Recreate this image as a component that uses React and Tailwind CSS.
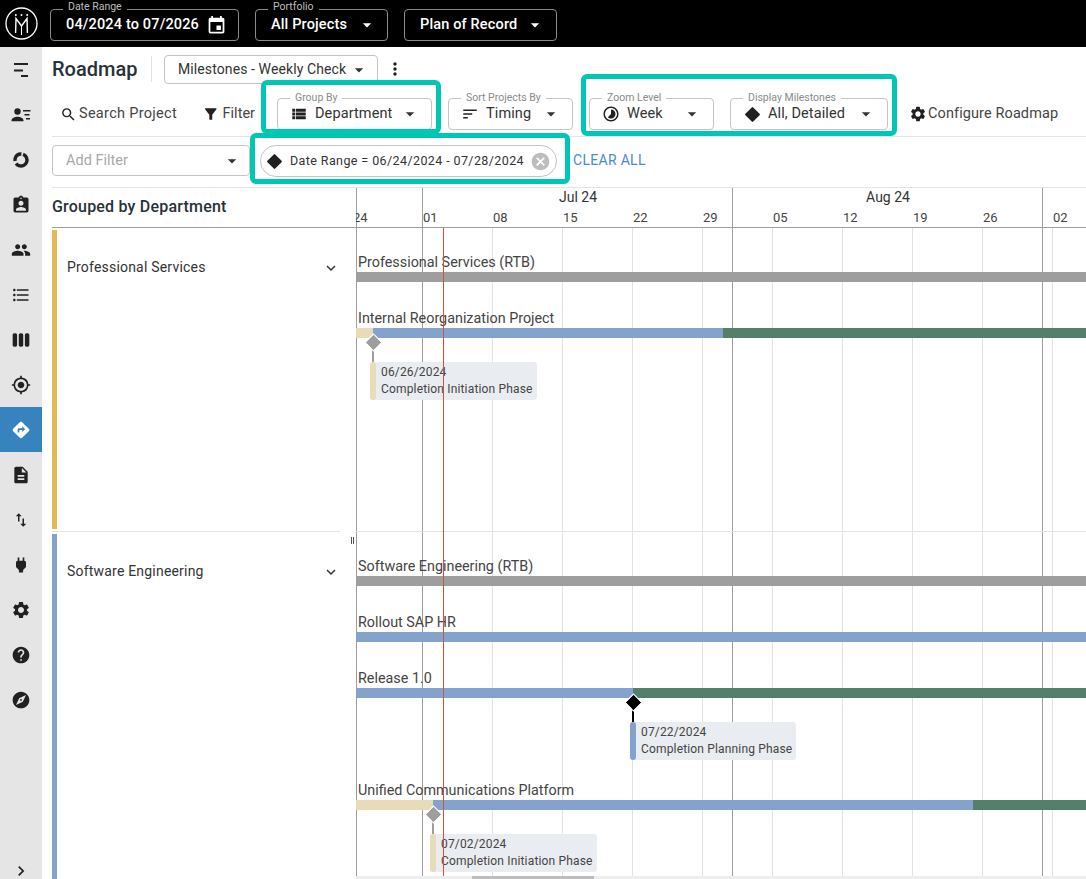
import React from 'react';
import {
  MdArrowDropDown, MdEvent, MdSearch, MdFilterAlt, MdViewList, MdSort, MdSettings, MdCancel,
  MdChevronRight, MdExpandMore, MdMoreVert, MdAssignmentInd, MdPeople, MdFormatListBulleted,
  MdViewWeek, MdGpsFixed, MdDirections, MdDescription, MdPower, MdHelp, MdExplore,
  MdSwapVert, MdTimelapse,
} from 'react-icons/md';

const FirstNavIcon = () => (
  <svg width="20" height="20" viewBox="0 0 20 20" fill="currentColor">
    <rect x="3" y="3" width="14" height="2" />
    <rect x="3" y="9.5" width="9" height="2" />
    <rect x="10" y="15" width="7" height="2" />
  </svg>
);

const ContactNavIcon = () => (
  <svg width="20" height="20" viewBox="0 0 20 20" fill="currentColor">
    <circle cx="6.5" cy="6.5" r="3.2" />
    <path d="M0.5 15.5c0-2.6 3.6-3.8 6-3.8s6 1.2 6 3.8v0.7h-12z" />
    <rect x="12" y="5" width="7.5" height="1.5" />
    <rect x="13.5" y="9" width="5" height="1.5" />
    <rect x="15" y="13" width="4" height="1.5" />
  </svg>
);

const DonutNavIcon = () => (
  <svg width="20" height="20" viewBox="0 0 20 20" fill="none" stroke="currentColor">
    <circle cx="10" cy="10" r="6" strokeWidth="3.4" strokeDasharray="22 2.5 10.5 2.7" transform="rotate(-70 10 10)" />
  </svg>
);

const Logo = () => (
  <svg width="33" height="33" viewBox="0 0 33 33" fill="none" stroke="#fff">
    <circle cx="16.5" cy="16.5" r="15.5" strokeWidth="1.3" />
    <path d="M10.6 26L11 11.5L16.5 19L22 11.5L22.4 26" strokeWidth="1.4" />
    <path d="M16.5 19V28" strokeWidth="1" />
    <circle cx="10.8" cy="8" r="1" fill="#fff" stroke="none" />
    <circle cx="16.5" cy="8" r="1" fill="#fff" stroke="none" />
    <circle cx="22.2" cy="8" r="1" fill="#fff" stroke="none" />
  </svg>
);

const Diamond = ({ className = '' }) => (
  <span className={`block w-[11px] h-[11px] rotate-45 rounded-[1px] bg-[#212121] ${className}`} />
);

const navItems = [
  { icon: <FirstNavIcon /> },
  { icon: <ContactNavIcon /> },
  { icon: <DonutNavIcon /> },
  { icon: <MdAssignmentInd size={20} /> },
  { icon: <MdPeople size={20} /> },
  { icon: <MdFormatListBulleted size={20} /> },
  { icon: <MdViewWeek size={20} /> },
  { icon: <MdGpsFixed size={20} /> },
  { icon: <MdDirections size={20} />, active: true },
  { icon: <MdDescription size={20} /> },
  { icon: <MdSwapVert size={18} /> },
  { icon: <MdPower size={20} /> },
  { icon: <MdSettings size={20} /> },
  { icon: <MdHelp size={20} /> },
  { icon: <MdExplore size={20} /> },
];

const HeaderField = ({ label, children, className = '' }) => (
  <div className={`relative h-[32px] mt-[3px] flex items-center rounded-[4px] border border-[#8a8a8a] text-white font-medium text-[14.5px] tracking-[0.15px] ${className}`}>
    {label && (
      <span className="absolute -top-[10px] left-[12px] bg-black px-[5px] text-[10.5px] leading-[13px] font-normal tracking-normal text-[#bdbdbd]">
        {label}
      </span>
    )}
    {children}
  </div>
);

const ToolField = ({ label, icon, value, className = '' }) => (
  <div className={`relative h-[32px] shrink-0 flex items-center rounded-[4px] border border-[#c4c4c4] bg-white pl-[12px] text-[14.5px] tracking-[0.1px] text-[#333] ${className}`}>
    <span className="absolute -top-[8px] left-[12px] bg-white px-[5px] text-[10.5px] leading-[13px] text-[#8a8a8a] tracking-normal whitespace-nowrap">
      {label}
    </span>
    <span className="w-[18px] flex justify-center text-[#212121]">{icon}</span>
    <span className="ml-[7px] flex-1 whitespace-nowrap">{value}</span>
    <MdArrowDropDown size={20} className="mr-[11px] text-[#333]" />
  </div>
);

// teal annotation frame laid over the controls it marks
const Highlight = ({ className = '' }) => (
  <div className={`absolute z-10 pointer-events-none rounded-[6px] border-[5px] border-[#00c6b5] ${className}`} />
);

const months = [
  { label: 'Jul 24', x: 222 },
  { label: 'Aug 24', x: 532 },
];

const weeks = [
  { label: '01', x: 66 },
  { label: '08', x: 136 },
  { label: '15', x: 206 },
  { label: '22', x: 276 },
  { label: '29', x: 346 },
  { label: '05', x: 416 },
  { label: '12', x: 486 },
  { label: '19', x: 556 },
  { label: '26', x: 626 },
  { label: '02', x: 696 },
];

const majorLines = [0, 66, 376, 686];

const TAN = 'bg-[#e8dbb8]';
const BLUE = 'bg-[#84a3cc]';
const GREEN = 'bg-[#537f6b]';
const GRAY = 'bg-[#9e9e9e]';

// all x / y are relative to the timeline canvas (left 356, top 228)
const rows = [
  { name: 'Professional Services (RTB)', y: 44, parts: [{ c: GRAY, to: 730 }] },
  { name: 'Internal Reorganization Project', y: 100, parts: [{ c: TAN, to: 17 }, { c: BLUE, to: 367 }, { c: GREEN, to: 730 }] },
  { name: 'Software Engineering (RTB)', y: 348, parts: [{ c: GRAY, to: 730 }] },
  { name: 'Rollout SAP HR', y: 404, parts: [{ c: BLUE, to: 730 }] },
  { name: 'Release 1.0', y: 460, parts: [{ c: BLUE, to: 277 }, { c: GREEN, to: 730 }] },
  { name: 'Unified Communications Platform', y: 572, parts: [{ c: TAN, to: 77 }, { c: BLUE, to: 617 }, { c: GREEN, to: 730 }] },
];

const milestones = [
  { x: 17, y: 110, date: '06/26/2024', text: 'Completion Initiation Phase', bar: TAN, done: false },
  { x: 277, y: 470, date: '07/22/2024', text: 'Completion Planning Phase', bar: BLUE, done: true },
  { x: 77, y: 582, date: '07/02/2024', text: 'Completion Initiation Phase', bar: TAN, done: false },
];

const Timeline = () => (
  <div className="relative flex-1 h-full overflow-hidden">
    {weeks.map((w) => (
      <div key={w.x} className="absolute top-0 bottom-0 w-px bg-[#e2e2e2]" style={{ left: w.x }} />
    ))}
    {majorLines.map((x) => (
      <div key={x} className="absolute top-0 bottom-0 w-px bg-[#9e9e9e]" style={{ left: x }} />
    ))}
    <div className="absolute left-0 right-0 top-[303px] h-px bg-[#e4e4e4]" />
    {rows.map((r) => (
      <div key={r.name} className="absolute left-0 right-0" style={{ top: r.y - 16 }}>
        <div className="absolute left-[2px] -top-[3px] text-[14.35px] leading-[20px] text-[#444] whitespace-nowrap">{r.name}</div>
        {r.parts.map((p, i) => {
          const from = i === 0 ? 0 : r.parts[i - 1].to;
          return <div key={i} className={`absolute top-[16px] h-[10px] ${p.c}`} style={{ left: from, width: p.to - from }} />;
        })}
      </div>
    ))}
    {milestones.map((m) => (
      <div key={m.date}>
        <div className={`absolute w-[2px] h-[20px] ${m.done ? 'bg-black' : 'bg-[#9e9e9e]'}`} style={{ left: m.x - 1, top: m.y + 4 }} />
        <div
          className={`absolute w-[11px] h-[11px] rotate-45 outline-1 outline-white ${m.done ? 'bg-black' : 'bg-[#9e9e9e]'}`}
          style={{ left: m.x - 5.5, top: m.y - 1.5 }}
        />
        <div className="absolute flex h-[38px] rounded-[3px] bg-[#e9ecf0] pr-[4px] text-[12px] leading-[17px] tracking-[0.16px] text-[#444] whitespace-nowrap" style={{ left: m.x - 3, top: m.y + 24 }}>
          <span className={`w-[6px] rounded-[3px] ${m.bar}`} />
          <div className="pl-[5px] pt-[2px]">
            <div>{m.date}</div>
            <div>{m.text}</div>
          </div>
        </div>
      </div>
    ))}
    <div className="absolute top-0 bottom-0 left-[87px] w-px bg-[#d9503f]" />
    <div className="absolute left-0 right-0 bottom-0 h-[3px] bg-[#eeeeee]">
      <div className="absolute left-[116px] w-[122px] h-full bg-[#bdbdbd]" />
    </div>
  </div>
);

const GroupRow = ({ color, name, className = '' }) => (
  <div className={`flex ${className}`}>
    <div className={`w-[5px] ${color}`} />
    <div className="flex-1 flex items-start justify-between pl-[10px] pt-[27px] text-[14px] tracking-[0.2px] text-[#333]">
      <span>{name}</span>
      <MdExpandMore size={18} className="mt-[2px] text-[#333]" />
    </div>
  </div>
);

export default function App() {
  return (
    <div className="w-[1086px] h-[879px] overflow-hidden bg-white font-['Roboto',sans-serif] flex flex-col">
      <header className="h-[47px] bg-black flex items-center shrink-0">
        <div className="ml-[5px] mr-[12px] flex"><Logo /></div>
        <HeaderField label="Date Range" className="w-[189px] pl-[15px]">
          <span>04/2024 to 07/2026</span>
          <MdEvent size={21} className="ml-[7px]" />
        </HeaderField>
        <HeaderField label="Portfolio" className="w-[133px] ml-[16px] pl-[15px]">
          <span>All Projects</span>
          <MdArrowDropDown size={20} className="ml-[10px]" />
        </HeaderField>
        <HeaderField className="w-[153px] ml-[16px] pl-[15px]">
          <span>Plan of Record</span>
          <MdArrowDropDown size={20} className="ml-[8px]" />
        </HeaderField>
      </header>

      <div className="flex flex-1 min-h-0">
        <nav className="relative w-[42px] shrink-0 bg-[#e5e5e5]">
          {navItems.map((item, i) => (
            <div
              key={i}
              className={`h-[45px] flex items-center justify-center ${item.active ? 'bg-[#3783bd] text-white' : 'text-[#212121]'}`}
            >
              {item.icon}
            </div>
          ))}
          <MdChevronRight size={20} className="absolute left-[11px] bottom-[-2px] text-[#212121]" />
        </nav>

        <main className="flex-1 min-w-0 flex flex-col">
          <div className="h-[40px] shrink-0 flex items-center pl-[10px] pt-[3px]">
            <h1 className="text-[20px] font-medium text-[#263238] w-[99px]">Roadmap</h1>
            <div className="w-px h-[26px] bg-[#e0e0e0]" />
            <div className="ml-[12px] mt-[2px] h-[29px] w-[214px] flex items-center rounded-[4px] border border-[#c4c4c4] pl-[13px] text-[14px] tracking-[0.1px] text-[#333]">
              <span className="whitespace-nowrap">Milestones - Weekly Check</span>
              <MdArrowDropDown size={20} className="ml-[3px]" />
            </div>
            <MdMoreVert size={20} className="ml-[7px] text-[#212121]" />
          </div>

          <div className="h-[50px] shrink-0 ml-[10px] border-b border-[#e4e4e4] flex items-start pt-[11px]">
            <div className="h-[32px] ml-[8px] w-[117px] shrink-0 flex items-center text-[14.5px] tracking-[0.3px] text-[#444] whitespace-nowrap">
              <MdSearch size={19} className="text-[#212121]" />
              <span className="ml-[2px]">Search Project</span>
            </div>
            <div className="h-[32px] ml-[25px] w-[53px] shrink-0 flex items-center text-[14.5px] text-[#444]">
              <MdFilterAlt size={18} className="text-[#212121]" />
              <span className="ml-[3px]">Filter</span>
            </div>
            <div className="relative ml-[22px] shrink-0">
              <Highlight className="-left-[16px] -right-[9px] -top-[18px] -bottom-[4px]" />
              <ToolField label="Group By" icon={<MdViewList size={18} />} value="Department" className="w-[155px]" />
            </div>
            <ToolField label="Sort Projects By" icon={<MdSort size={18} />} value="Timing" className="w-[125px] ml-[16px]" />
            <div className="relative ml-[16px] flex gap-[16px] shrink-0">
              <Highlight className="-left-[8px] -right-[9px] -top-[24px] -bottom-[6px]" />
              <ToolField label="Zoom Level" icon={<MdTimelapse size={18} />} value="Week" className="w-[125px]" />
              <ToolField label="Display Milestones" icon={<Diamond />} value="All, Detailed" className="w-[158px]" />
            </div>
            <div className="h-[32px] flex items-center ml-[21px] text-[14.5px] tracking-[0.1px] text-[#444] whitespace-nowrap">
              <MdSettings size={18} className="text-[#212121]" />
              <span className="ml-[1px]">Configure Roadmap</span>
            </div>
          </div>

          <div className="h-[51px] shrink-0 ml-[10px] border-b border-[#e4e4e4] flex items-start pt-[8px]">
            <div className="w-[198px] h-[31px] shrink-0 flex items-center justify-between rounded-[4px] border border-[#c4c4c4] pl-[13px] pr-[7px] text-[14.5px] text-[#a8a8a8]">
              <span>Add Filter</span>
              <MdArrowDropDown size={20} className="text-[#333]" />
            </div>
            <div className="relative ml-[10px] w-[297px] h-[32px] shrink-0 flex items-center rounded-full border border-[#c4c4c4] pl-[8px] text-[12.5px] tracking-[0.4px] text-[#333] whitespace-nowrap">
              <Highlight className="-left-[11px] -right-[14px] -top-[13px] -bottom-[8px]" />
              <Diamond />
              <span className="ml-[10px]">Date Range = 06/24/2024 - 07/28/2024</span>
              <MdCancel size={21} className="ml-[6px] text-[#bdbdbd]" />
            </div>
            <span className="ml-[16px] mt-[5px] text-[14px] tracking-[0.3px] text-[#4a8ccb]">CLEAR ALL</span>
          </div>

          <div className="h-[40px] shrink-0 flex border-b border-[#9e9e9e] ml-[10px]">
            <div className="w-[304px] pt-[7px] text-[16px] tracking-[0.2px] font-medium text-[#263238]">Grouped by Department</div>
            <div className="relative flex-1 overflow-hidden">
              {majorLines.map((x) => (
                <div key={x} className="absolute top-0 bottom-0 w-px bg-[#9e9e9e]" style={{ left: x }} />
              ))}
              {months.map((m) => (
                <span key={m.label} className="absolute top-0 -translate-x-[50%] text-[14px] leading-[18px] text-[#333]" style={{ left: m.x }}>{m.label}</span>
              ))}
              <span className="absolute -left-[3px] top-[22px] text-[13px] leading-[16px] text-[#444]">24</span>
              {weeks.map((w) => (
                <span key={w.x} className="absolute top-[22px] text-[13px] leading-[16px] text-[#444]" style={{ left: w.x + 1 }}>{w.label}</span>
              ))}
            </div>
          </div>

          <div className="flex flex-1 min-h-0 relative">
            <div className="w-[314px] shrink-0 pl-[10px] pt-[2px] flex flex-col relative">
              <GroupRow color="bg-[#e5b955]" name="Professional Services" className="h-[299px] mr-[16px]" />
              <div className="h-px bg-[#e4e4e4] my-[2px] mr-[16px]" />
              <GroupRow color="bg-[#84a3cc]" name="Software Engineering" className="flex-1 mr-[16px]" />
              <div className="absolute right-[2px] top-[309px] flex gap-[1px]">
                <span className="w-px h-[7px] bg-[#555]" />
                <span className="w-px h-[7px] bg-[#555]" />
              </div>
            </div>
            <Timeline />
          </div>
        </main>
      </div>
    </div>
  );
}
